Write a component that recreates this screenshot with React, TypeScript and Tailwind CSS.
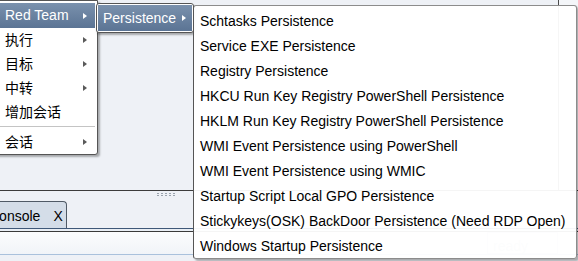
import React from 'react';

const persistenceItems = [
  'Schtasks Persistence',
  'Service EXE Persistence',
  'Registry Persistence',
  'HKCU Run Key Registry PowerShell Persistence',
  'HKLM Run Key Registry PowerShell Persistence',
  'WMI Event Persistence using PowerShell',
  'WMI Event Persistence using WMIC',
  'Startup Script Local GPO Persistence',
  'Stickykeys(OSK) BackDoor Persistence (Need RDP Open)',
  'Windows Startup Persistence',
];

const Arrow: React.FC<{ light?: boolean }> = ({ light }) => (
  <span
    className={`block w-0 h-0 border-y-[3px] border-y-transparent border-l-[4px] ${
      light ? 'border-l-white' : 'border-l-[#5a5a5a]'
    }`}
  />
);

const MenuRow: React.FC<{ label: string; arrow?: boolean; first?: boolean }> = ({ label, arrow, first }) => (
  <div className={`flex items-center justify-between pl-[7px] pr-[8px] ${first ? 'h-[25px]' : 'h-[24px]'}`}>
    <span>{label}</span>
    {arrow && <Arrow />}
  </div>
);

const App: React.FC = () => {
  return (
    <div
      className="relative w-[578px] h-[261px] overflow-hidden bg-[#eef1f6] text-[14px] text-black"
      style={{ fontFamily: "'Liberation Sans', 'Noto Sans CJK SC', sans-serif" }}
    >
      {/* background window */}
      <div className="flex flex-col h-full">
        <div className="flex h-[191px] border-b border-[#3c3c3c]">
          <div className="flex-1 border-r border-[#4a4a4a]" />
          <div className="w-[19px] bg-[#f4f6f9]" />
        </div>
        <div className="relative h-[10px]">
          <div className="absolute left-[157px] top-[2px] grid grid-cols-5 gap-x-[2px] gap-y-[1px]">
            {Array.from({ length: 10 }).map((_, i) => (
              <span key={i} className="block w-[2px] h-[1px] bg-[#9aa3ad]" />
            ))}
          </div>
        </div>
        <div className="flex h-[27px] items-end">
          <div className="flex items-center gap-[13px] h-[27px] w-[78px] -ml-[11px] bg-[#d4dde8] border-t border-r border-[#505a66] rounded-tr-[4px] pt-[2px]">
            <span>Console</span>
            <span>X</span>
          </div>
        </div>
        <div className="h-[1px] bg-[#3f5878]" />
        <div className="h-[2px] bg-[#e9eef4]" />
        <div className="h-[1px] bg-[#3a3a3a]" />
        <div className="flex h-[22px] bg-gradient-to-b from-[#fbfcfd] to-[#f1f4f8]">
          <div className="ml-[487px] w-[71px] border border-[#d6dbe2] text-[#c4cad2] pl-[5px] pt-[3px]">ready</div>
        </div>
        <div className="h-[1px] bg-[#a9c1dc]" />
        <div className="flex-1" />
      </div>

      {/* main popup menu */}
      <div className="absolute left-[-6px] top-0 w-[104px] bg-white border border-[#555] rounded-br-[3px] pt-[2px] pr-[2px] shadow-[2px_2px_2px_rgba(0,0,0,0.3)]">
        <div className="flex items-center justify-between h-[25px] pl-[10px] pr-[8px] text-white bg-gradient-to-b from-[#7a91ad] to-[#5b7494]">
          <span>Red Team</span>
          <Arrow light />
        </div>
        <div className="pl-[3px]">
          <MenuRow label="执行" arrow />
          <MenuRow label="目标" arrow />
          <MenuRow label="中转" arrow />
          <MenuRow label="增加会话" />
        </div>
        <div className="h-[6px] flex flex-col justify-center">
          <div className="h-[1px] bg-[#c4c4c4]" />
          <div className="h-[1px] bg-white" />
        </div>
        <div className="pl-[3px]">
          <MenuRow label="会话" arrow />
        </div>
      </div>

      {/* Red Team submenu */}
      <div className="absolute left-[96px] top-[3px] w-[98px] h-[30px] bg-white border border-[#555] rounded-[3px] p-[1px] shadow-[1px_2px_2px_rgba(0,0,0,0.3)]">
        <div className="flex items-center justify-between h-full pl-[5px] pr-[6px] text-white bg-gradient-to-b from-[#7a91ad] to-[#5b7494]">
          <span>Persistence</span>
          <Arrow light />
        </div>
      </div>

      {/* Persistence submenu */}
      <div className="absolute left-[193px] top-[5px] w-[384px] h-[254px] bg-white/95 border border-[#8c8c8c] border-l-[#555] rounded-[3px] pt-[3px] shadow-[2px_2px_2px_rgba(0,0,0,0.3)]">
        {persistenceItems.map((item) => (
          <div key={item} className="flex items-center h-[25px] pl-[6px]">
            {item}
          </div>
        ))}
      </div>
    </div>
  );
};

export default App;
